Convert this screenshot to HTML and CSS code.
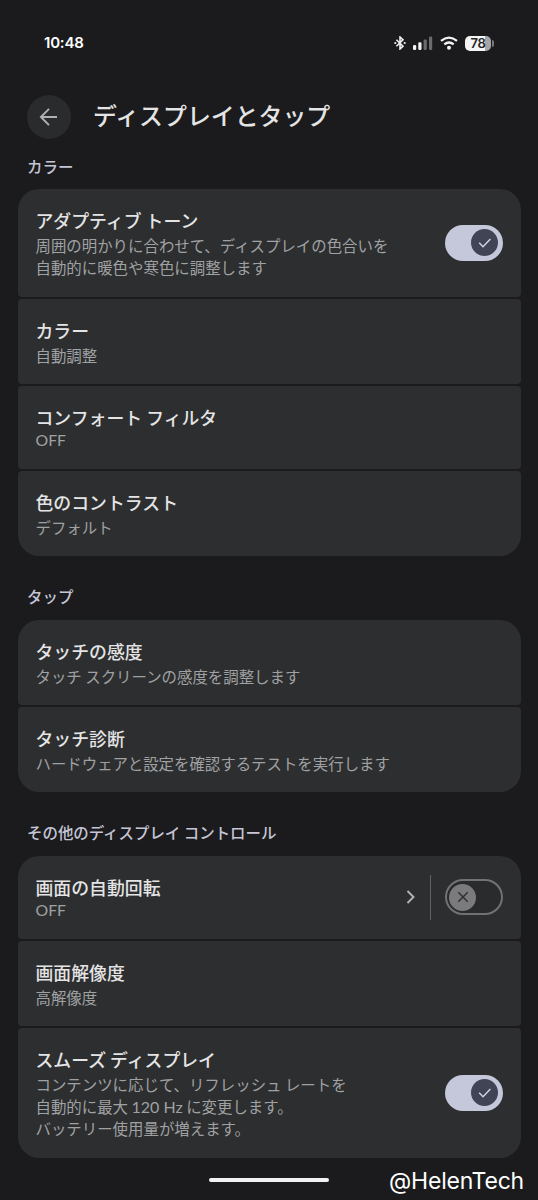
FILE: index.html
```html
<!DOCTYPE html>
<html lang="ja">
<head>
<meta charset="utf-8">
<title>ディスプレイとタップ</title>
<link rel="stylesheet" href="styles.css">
</head>
<body>
<div class="screen">
  <header class="status">
    <span class="clock">10:48</span>
    <div class="status-icons">
      <svg class="bluetooth" width="12" height="14" viewBox="0 0 12 14"><path d="M2.4 3.7 9 10.2 6 13V1l3 2.8-6.6 6.5" fill="none" stroke="#eee" stroke-width="1.6"/><circle cx="1.3" cy="7" r="1.1" fill="#eee"/><circle cx="10.7" cy="7" r="1.1" fill="#eee"/></svg>
      <svg class="signal" width="20" height="14" viewBox="0 0 20 14"><g fill="#f4f4f4"><rect x="0" y="9" width="3.2" height="5" rx="1.2"/><rect x="5.3" y="6.3" width="3.2" height="7.7" rx="1.2"/></g><g fill="#6b6b6d"><rect x="10.6" y="3.4" width="3.2" height="10.6" rx="1.2"/><rect x="16" y="0.5" width="3.2" height="13.5" rx="1.2"/></g></svg>
      <svg class="wifi" width="18" height="14" viewBox="0 0 18 14"><path d="M1 4.8Q9-1.7 17 4.8M4.3 8.4q4.7-3.8 9.4 0" fill="none" stroke="#f4f4f4" stroke-width="2.2"/><circle cx="9" cy="11.7" r="2" fill="#f4f4f4"/></svg>
      <div class="battery"><span class="battery-level">78</span></div>
      <span class="battery-tip"></span>
    </div>
  </header>

  <div class="app-bar">
    <button class="back" aria-label="戻る"><svg width="20" height="20" viewBox="0 0 20 20"><path d="M18 10H2M10 1.8 1.9 10l8.1 8.2" fill="none" stroke="#b0b1b2" stroke-width="1.9"/></svg></button>
    <h1 class="page-title">ディスプレイとタップ</h1>
  </div>

  <main>
    <h2 class="section-label">カラー</h2>
    <section class="group group-color">
      <div class="row row-two-lines">
        <div class="copy"><div class="title">アダプティブ トーン</div><div class="summary">周囲の明かりに合わせて、ディスプレイの色合いを<br>自動的に暖色や寒色に調整します</div></div>
        <div class="switch switch-on"><span class="thumb"><svg width="14" height="12" viewBox="0 0 14 12"><path d="m1.2 5.8 3.8 4 7.4-7.9" fill="none" stroke="#d4d6e2" stroke-width="1.4"/></svg></span></div>
      </div>
      <div class="row"><div class="copy"><div class="title">カラー</div><div class="summary">自動調整</div></div></div>
      <div class="row row-latin"><div class="copy"><div class="title">コンフォート フィルタ</div><div class="summary">OFF</div></div></div>
      <div class="row"><div class="copy"><div class="title">色のコントラスト</div><div class="summary">デフォルト</div></div></div>
    </section>

    <h2 class="section-label">タップ</h2>
    <section class="group">
      <div class="row"><div class="copy"><div class="title">タッチの感度</div><div class="summary">タッチ スクリーンの感度を調整します</div></div></div>
      <div class="row"><div class="copy"><div class="title">タッチ診断</div><div class="summary">ハードウェアと設定を確認するテストを実行します</div></div></div>
    </section>

    <h2 class="section-label">その他のディスプレイ コントロール</h2>
    <section class="group">
      <div class="row row-latin">
        <div class="copy"><div class="title">画面の自動回転</div><div class="summary">OFF</div></div>
        <svg class="chevron" width="10" height="14" viewBox="0 0 10 14"><path d="m1.5 1 6 6-6 6" fill="none" stroke="#b4b5b6" stroke-width="1.9"/></svg>
        <span class="divider"></span>
        <div class="switch switch-off"><span class="thumb"><svg width="12" height="12" viewBox="0 0 12 12"><path d="m1.3 1.3 9.4 9.4m0-9.4-9.4 9.4" fill="none" stroke="#303133" stroke-width="1.5"/></svg></span></div>
      </div>
      <div class="row"><div class="copy"><div class="title">画面解像度</div><div class="summary">高解像度</div></div></div>
      <div class="row row-three-lines">
        <div class="copy"><div class="title">スムーズ ディスプレイ</div><div class="summary">コンテンツに応じて、リフレッシュ レートを<br>自動的に最大 <span class="latin">120 Hz</span> に変更します。<br>バッテリー使用量が増えます。</div></div>
        <div class="switch switch-on"><span class="thumb"><svg width="14" height="12" viewBox="0 0 14 12"><path d="m1.2 5.8 3.8 4 7.4-7.9" fill="none" stroke="#d4d6e2" stroke-width="1.4"/></svg></span></div>
      </div>
    </section>
  </main>

  <footer class="footer"><span class="home-bar"></span><span class="credit">@HelenTech</span></footer>
</div>
</body>
</html>
```
FILE: styles.css
```css
* { box-sizing: border-box; }
body { margin: 0; background: #1b1b1d; color: #e4e4e5; font-family: "Noto Sans CJK JP", sans-serif; }
h1, h2 { margin: 0; font-weight: 500; }
svg { display: block; flex: none; }
.screen { width: 538px; height: 1200px; overflow: hidden; }
.status { height: 94px; padding: 33px 44px 0 44px; display: flex; justify-content: space-between; align-items: flex-start; }
.clock { font: 600 15px/20px Inter, sans-serif; letter-spacing: -0.2px; color: #fff; }
.status-icons { display: flex; align-items: center; height: 20px; }
.signal { margin-left: 7px; }
.wifi { margin-left: 7px; }
.battery { width: 26px; height: 15px; margin-left: 7px; border-radius: 5px; background: linear-gradient(90deg, #f5f5f5 78%, #a5a5a7 78%); color: #252527; text-align: center; font: 600 13px/15px Inter, sans-serif; letter-spacing: -0.3px; }
.battery-tip { width: 2px; height: 7px; margin-left: 1px; border-radius: 0 2px 2px 0; background: #77777a; }
.app-bar { height: 45px; padding-left: 27px; display: flex; align-items: center; }
.back { width: 44px; height: 44px; padding: 0; border: 0; border-radius: 50%; background: #292b2d; display: grid; place-items: center; }
.page-title { margin-left: 22px; font-size: 23.9px; line-height: 36px; padding-bottom: 4px; white-space: nowrap; }
.section-label { height: 64px; padding: 28px 0 0 27px; font-size: 15.45px; line-height: 24px; color: #c5c5d6; }
.section-label:first-child { height: 50px; padding-top: 15px; }
.group { margin: 0 17.5px; display: flex; flex-direction: column; gap: 2px; }
.row { height: 85px; padding: 19px 18px 0; border-radius: 4px; background: #2c2e2f; display: flex; align-items: flex-start; }
.row:first-child { border-radius: 21px 21px 4px 4px; }
.row:last-child { border-radius: 4px 4px 21px 21px; }
.row-latin { height: 83px; }
.row-two-lines { height: 108px; }
.row-three-lines { height: 130px; }
.copy { flex: 1; white-space: nowrap; }
.title { font-size: 17.88px; font-weight: 500; line-height: 24px; }
.summary { margin-top: 1.8px; font-size: 15.43px; line-height: 22.3px; color: #a0a1a3; }
.row-latin .summary { margin-top: 0; font-family: Lato, sans-serif; font-size: 15.8px; line-height: 22px; }
.latin { font-family: Lato, sans-serif; font-size: 16px; line-height: 1; }
.switch { flex: none; align-self: center; width: 58px; height: 36px; margin-top: -20px; border-radius: 18px; display: flex; align-items: center; }
.switch-on { justify-content: flex-end; padding-right: 4.5px; background: #c5c7da; }
.switch-off { padding-left: 2.5px; border: 2px solid #717273; background: #2a2b2d; }
.thumb { width: 27px; height: 27px; border-radius: 50%; display: grid; place-items: center; }
.switch-on .thumb { background: #414454; }
.switch-off .thumb { background: #7b7b7d; }
.chevron { align-self: center; margin: -20px 13.5px 0 0; }
.divider { align-self: center; width: 1.5px; height: 45px; margin: -20px 13.5px 0 0; background: #606163; }
.footer { height: 44px; padding: 0 14px 0 209px; display: flex; justify-content: space-between; align-items: center; }
.home-bar { width: 120px; height: 4px; border-radius: 2px; background: #f2f2f2; }
.credit { padding-top: 2px; color: #fff; font: 400 23px/30px Inter, sans-serif; letter-spacing: -0.2px; }
```
